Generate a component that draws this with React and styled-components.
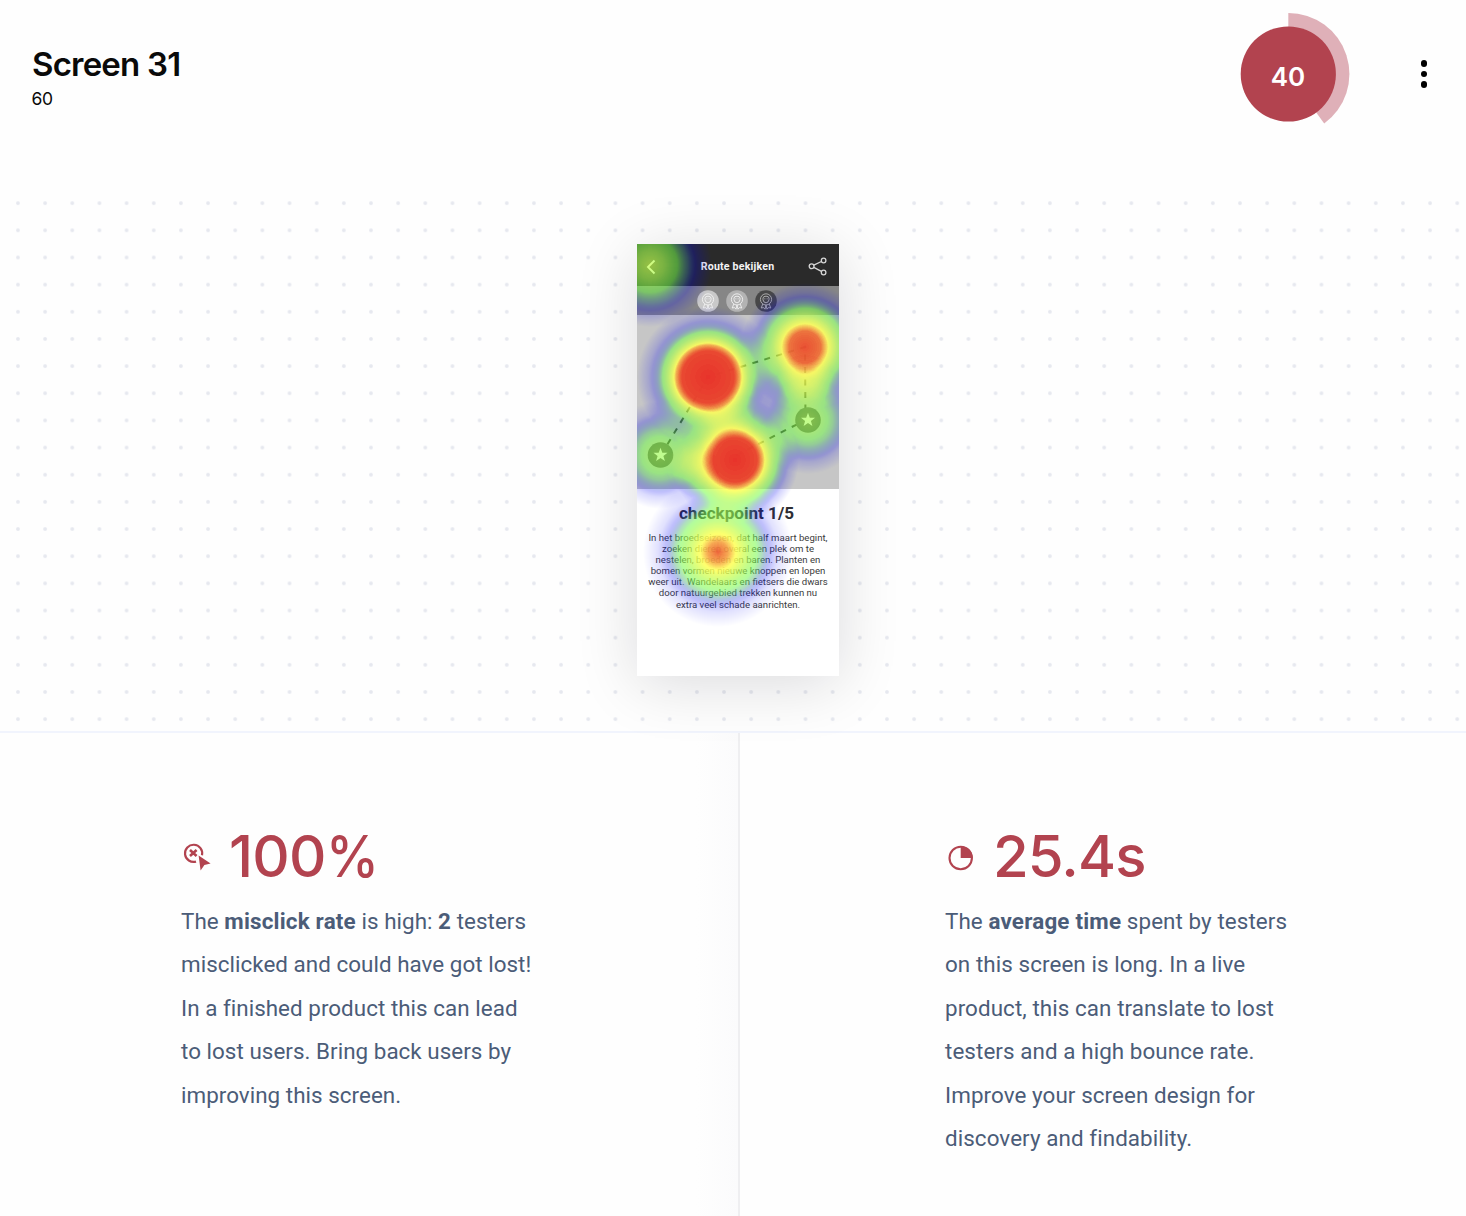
import React from "react";
import styled, { createGlobalStyle } from "styled-components";

const RED = "#b2434f";
const SLATE = "#4b5c78";

const Global = createGlobalStyle`
  *, *::before, *::after { box-sizing: border-box; }
  body { margin: 0; background: #fff; font-family: Inter, "Liberation Sans", sans-serif; color: #0a0a0a; }
  h1, h2, p { margin: 0; }
`;

const Page = styled.main`
  width: 1466px;
  height: 1216px;
  display: flex;
  flex-direction: column;
  overflow: hidden;
  background: #fefefe;
`;

const Header = styled.header`
  height: 189px;
  flex: none;
  display: flex;
  justify-content: space-between;
  align-items: flex-start;
  padding: 0 27px 0 32px;
`;

const Heading = styled.div`
  padding-top: 43.5px;
`;

const Title = styled.h1`
  font-size: 33px;
  line-height: 40px;
  font-weight: 600;
  letter-spacing: -0.8px;
`;

const Subtitle = styled.p`
  margin: 4.5px 0 0 -0.5px;
  font-size: 17.5px;
  line-height: 22px;
  letter-spacing: -0.3px;
`;

const Actions = styled.div`
  display: flex;
  align-items: center;
  gap: 59px;
  padding-top: 12px;
`;

const ScoreRing = styled.svg`
  width: 124px;
  height: 124px;
  display: block;
`;

const ScoreText = styled.text`
  font: 600 26px Inter, sans-serif;
  fill: #fff;
  text-anchor: middle;
`;

const MenuButton = styled.button`
  width: 30px;
  height: 40px;
  border: 0;
  padding: 0;
  background: none;
  display: flex;
  flex-direction: column;
  align-items: center;
  justify-content: center;
  gap: 3.4px;
`;

const MenuDot = styled.span`
  width: 6.8px;
  height: 6.8px;
  border-radius: 50%;
  background: #000;
`;

const Canvas = styled.section`
  height: 544px;
  flex: none;
  display: flex;
  justify-content: center;
  align-items: flex-start;
  padding: 55px 0 0 10px;
  border-bottom: 2px solid #f1f4fd;
  background-image: radial-gradient(circle, #e6e8ef 1.3px, rgba(230, 232, 239, 0) 2.4px);
  background-size: 27.17px 27.17px;
  background-position: 4.4px 0.6px;
`;

const Device = styled.article`
  position: relative;
  width: 201.5px;
  height: 432px;
  display: flex;
  flex-direction: column;
  background: #fff;
  font-family: Roboto, sans-serif;
  box-shadow: 0 8px 58px rgba(0, 10, 18, 0.14);
`;

const DeviceBar = styled.div`
  height: 42px;
  display: grid;
  grid-template-columns: 30px 1fr 30px;
  align-items: center;
  padding-right: 4px;
  background: #2a2a2a;
  color: #f4f4f4;
  svg { display: block; }
`;

const DeviceTitle = styled.div`
  text-align: center;
  font-size: 10.6px;
  font-weight: 700;
  letter-spacing: 0.2px;
  white-space: nowrap;
  padding: 2px 0 0 3px;
`;

const Badges = styled.div`
  height: 29px;
  display: flex;
  justify-content: center;
  align-items: center;
  gap: 7px;
  padding-right: 2px;
  background: #868686;
`;

const BadgeIcon = styled.svg`
  width: 22px;
  height: 22px;
  display: block;
  color: ${(p) => (p.$dark ? "#b4b4b4" : "#f2f2f2")};
`;

const RouteMap = styled.svg`
  width: 100%;
  height: 173.5px;
  display: block;
  background: #c6c6c6;
`;

const Checkpoint = styled.h2`
  margin-top: 14px;
  padding-right: 3px;
  text-align: center;
  font-size: 17.1px;
  line-height: 20px;
  font-weight: 700;
  color: #2e2e33;
`;

const Story = styled.p`
  margin-top: 9px;
  text-align: center;
  white-space: pre-line;
  font-size: 9.6px;
  line-height: 11.17px;
  color: #3c3c3c;
`;

const HeatLayer = styled.svg`
  position: absolute;
  inset: 0;
  width: 100%;
  height: 100%;
`;

const Stats = styled.section`
  flex: 1;
  display: grid;
  grid-template-columns: 740px 1fr;
`;

const Stat = styled.div`
  padding: 91px 0 0 ${(p) => p.$inset}px;
  border-right: ${(p) => (p.$divided ? "2px solid #efeff1" : "0")};
  background: ${(p) =>
    p.$divided
      ? "linear-gradient(90deg, rgba(251,251,252,0) 696px, #fbfbfc 738px)"
      : "none"};
`;

const Metric = styled.div`
  display: flex;
  align-items: center;
  color: ${RED};
`;

const MetricIcon = styled.svg`
  width: 32px;
  height: 32px;
  margin-right: 16px;
  display: block;
  overflow: visible;
`;

const MetricValue = styled.div`
  font-size: 58px;
  line-height: 64px;
  font-weight: 500;
  letter-spacing: ${(p) => p.$tracking}px;
`;

const Percent = styled.span`
  display: inline-block;
  transform: scaleX(0.92);
  transform-origin: 0 50%;
`;

const Copy = styled.p`
  margin-top: 11.5px;
  white-space: pre-line;
  font: 400 22.4px/43.5px Roboto, sans-serif;
  letter-spacing: ${(p) => p.$tracking}px;
  color: ${SLATE};
  strong { font-weight: 700; letter-spacing: 0.2px; }
`;

const STORY = `In het broedseizoen, dat half maart begint,
zoeken dieren overal een plek om te
nestelen, broeden en baren. Planten en
bomen vormen nieuwe knoppen en lopen
weer uit. Wandelaars en fietsers die dwars
door natuurgebied trekken kunnen nu
extra veel schade aanrichten.`;

/* Intensity profiles: [radius in px, intensity] pairs. */
const CLICKS = [
  { x: 13, y: 21, p: [[0, 0.72], [14, 0.65], [28, 0.54], [38, 0.4], [48, 0.2], [62, 0]] },
  { x: 71, y: 133, p: [[0, 1], [26, 0.98], [32, 0.9], [38, 0.75], [45, 0.56], [51, 0.36], [60, 0.16], [71, 0]] },
  { x: 168, y: 103, p: [[0, 0.97], [16, 0.94], [22, 0.87], [29, 0.75], [38, 0.57], [46, 0.37], [54, 0.16], [64, 0]] },
  { x: 98, y: 216, p: [[0, 1], [22, 0.98], [28, 0.89], [33, 0.78], [41, 0.57], [48, 0.37], [55, 0.16], [64, 0]] },
  { x: 23, y: 211, p: [[0, 0.64], [14, 0.59], [25, 0.49], [34, 0.32], [42, 0.14], [54, 0]] },
  { x: 171, y: 176, p: [[0, 0.66], [14, 0.6], [25, 0.5], [34, 0.35], [42, 0.16], [54, 0]] },
  { x: 168, y: 136, p: [[0, 0.3], [12, 0.22], [28, 0]] },
  { x: 60, y: 224, p: [[0, 0.28], [14, 0.2], [30, 0]] },
  { x: 81, y: 308, p: [[0, 0.95], [10, 0.91], [19, 0.84], [28, 0.72], [36, 0.59], [44, 0.47], [51, 0.28], [60, 0.12], [75, 0]] },
];

function Heatmap() {
  return (
    <HeatLayer viewBox="0 0 201.5 432">
      <defs>
        {CLICKS.map((c, i) => {
          const r = c.p[c.p.length - 1][0];
          return (
            <radialGradient id={`click${i}`} key={i}>
              {c.p.map(([d, a]) => (
                <stop key={d} offset={d / r} stopColor="#000" stopOpacity={a} />
              ))}
            </radialGradient>
          );
        })}
        <filter id="ramp" filterUnits="userSpaceOnUse" x="0" y="0" width="201.5" height="432" colorInterpolationFilters="sRGB">
          <feColorMatrix values="0 0 0 1 0  0 0 0 1 0  0 0 0 1 0  0 0 0 1 0" />
          <feComponentTransfer>
            <feFuncR type="table" tableValues="0 0 0 0 0 0 .077 .153 .23 .307 .383 .46 .55 .64 .73 .82 .91 1 .97 .93 .91" />
            <feFuncG type="table" tableValues="0 0 0 0 0 0 .164 .328 .492 .656 .82 .984 .985 .988 .99 .995 1 1 .68 .38 .2" />
            <feFuncB type="table" tableValues=".96 .96 .96 .96 .96 .96 .85 .74 .63 .52 .41 .3 .3 .31 .31 .32 .32 .33 .27 .2 .17" />
          </feComponentTransfer>
        </filter>
      </defs>
      <g filter="url(#ramp)">
        {CLICKS.map((c, i) => (
          <circle key={i} cx={c.x} cy={c.y} r={c.p[c.p.length - 1][0]} fill={`url(#click${i})`} />
        ))}
      </g>
    </HeatLayer>
  );
}

function Badge({ fill, dark }) {
  return (
    <BadgeIcon viewBox="0 0 22 22" $dark={dark}>
      <circle cx="11" cy="11" r="10.8" fill={fill} />
      <g fill="none" stroke="currentColor" strokeWidth="0.9">
        <circle cx="11" cy="9.4" r="5.6" />
        <path d="M8 8.2q0-2 3-2t3 2v1.6q-.6 3-3 3t-3-3ZM9.4 8.8h.9M11.7 8.8h.9M7.8 14L6.2 18l2.4-.4 1.4 1.6 1-4.2 1 4.2 1.4-1.6 2.4.4-1.6-4" />
      </g>
    </BadgeIcon>
  );
}

const STAR = "M0-7.2L1.8-2.3 7-2.2 2.9 1 4.4 6 0 3.1-4.4 6-2.9 1-7-2.2-1.8-2.3Z";

function Phone() {
  return (
    <Device>
      <DeviceBar>
        <svg width="30" height="42" viewBox="0 0 30 42">
          <path d="M17.5 16.5L11 23L17.5 29.5" fill="none" stroke="#fff" strokeWidth="1.9" />
        </svg>
        <DeviceTitle>Route bekijken</DeviceTitle>
        <svg width="30" height="42" viewBox="0 0 30 42">
          <g fill="none" stroke="#d6d6d6" strokeWidth="1.3">
            <circle cx="6.6" cy="22.3" r="2.4" />
            <circle cx="18.6" cy="16.5" r="2.3" />
            <circle cx="18.6" cy="28.5" r="2.3" />
            <path d="M8.8 21.2L16.4 17.5M8.8 23.4L16.4 27.4" />
          </g>
        </svg>
      </DeviceBar>
      <Badges>
        <Badge fill="#c9c9c9" />
        <Badge fill="#b3b3b3" />
        <Badge fill="#474747" dark />
      </Badges>
      <RouteMap viewBox="0 0 201.5 173.5">
        <path d="M24 140L71 62L168 32L168.5 105L98 141" fill="none" stroke="#222" strokeWidth="2" strokeDasharray="6 6.5" />
        {[[23.5, 140], [171, 105]].map(([x, y]) => (
          <g key={x} transform={`translate(${x} ${y})`}>
            <circle r="12.8" fill="#4a4a4a" />
            <path d={STAR} fill="#fff" />
          </g>
        ))}
      </RouteMap>
      <Checkpoint>checkpoint 1/5</Checkpoint>
      <Story>{STORY}</Story>
      <Heatmap />
    </Device>
  );
}

export default function App() {
  return (
    <>
      <Global />
      <Page>
        <Header>
          <Heading>
            <Title>Screen 31</Title>
            <Subtitle>60</Subtitle>
          </Heading>
          <Actions>
            <ScoreRing viewBox="0 0 124 124">
              <path d="M62.3 62V1A61 61 0 0 1 98.2 111.4Z" fill="#dfb0b8" />
              <circle cx="62.3" cy="62" r="47.6" fill={RED} />
              <ScoreText x="62" y="73.8">40</ScoreText>
            </ScoreRing>
            <MenuButton aria-label="More">
              <MenuDot />
              <MenuDot />
              <MenuDot />
            </MenuButton>
          </Actions>
        </Header>
        <Canvas>
          <Phone />
        </Canvas>
        <Stats>
          <Stat $inset={181} $divided>
            <Metric>
              <MetricIcon viewBox="0 0 32 32">
                <g fill="none" stroke="currentColor" strokeWidth="2.2">
                  <path d="M15 21.6A8.6 8.6 0 1 1 21 15.2" />
                  <path d="M9 10L15.6 16M15.6 10L9 16" strokeWidth="2.6" />
                </g>
                <path d="M17.6 15.6L29.6 23.4L23.4 25L19.6 30.6Z" fill="currentColor" />
              </MetricIcon>
              <MetricValue $tracking={-0.7}>
                100<Percent>%</Percent>
              </MetricValue>
            </Metric>
            <Copy $tracking={0.04}>
              The <strong>misclick rate</strong> is high: <strong>2</strong> testers{"\n"}
              misclicked and could have got lost!{"\n"}
              In a finished product this can lead{"\n"}
              to lost users. Bring back users by{"\n"}
              improving this screen.
            </Copy>
          </Stat>
          <Stat $inset={205}>
            <Metric>
              <MetricIcon viewBox="0 0 32 32">
                <circle cx="15.7" cy="18" r="11.2" fill="none" stroke="currentColor" strokeWidth="2.1" />
                <path d="M15.7 18V6A12 12 0 0 1 27.7 18Z" fill="currentColor" />
              </MetricIcon>
              <MetricValue $tracking={-0.9}>25.4s</MetricValue>
            </Metric>
            <Copy $tracking={0.08}>
              The <strong>average time</strong> spent by testers{"\n"}
              on this screen is long. In a live{"\n"}
              product, this can translate to lost{"\n"}
              testers and a high bounce rate.{"\n"}
              Improve your screen design for{"\n"}
              discovery and findability.
            </Copy>
          </Stat>
        </Stats>
      </Page>
    </>
  );
}
